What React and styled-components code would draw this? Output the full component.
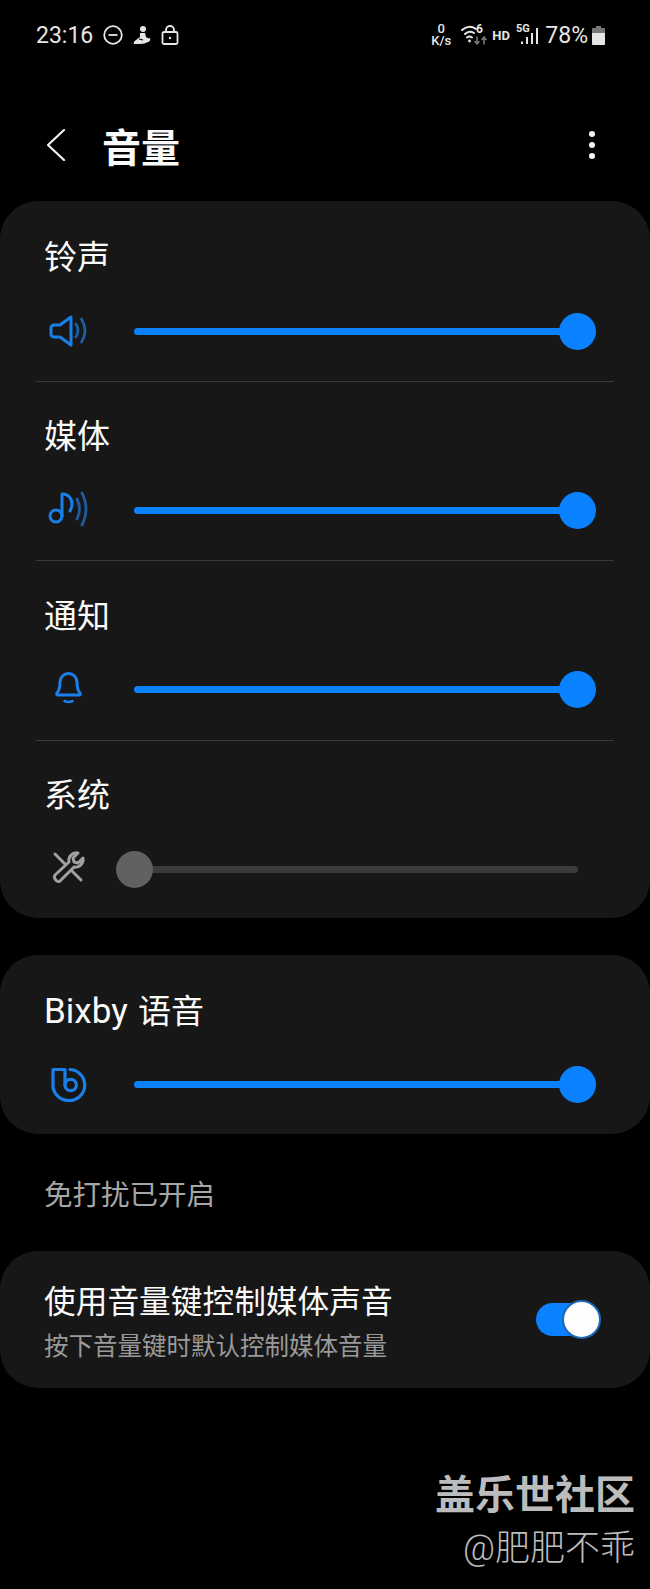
import styled, { createGlobalStyle } from 'styled-components';

const GlobalStyle = createGlobalStyle`
  html, body {
    margin: 0;
    padding: 0;
    background: #000;
  }
  body {
    font-family: Roboto, "Noto Sans CJK SC", sans-serif;
    color: #fafafa;
  }
`;

const Page = styled.div`
  width: 650px;
  height: 1589px;
  overflow: hidden;
  background: #000;
`;

const StatusBar = styled.div`
  height: 70px;
  padding: 0 45px 0 36px;
  box-sizing: border-box;
  display: flex;
  align-items: center;
  justify-content: space-between;
  color: #e6e6e6;
`;

const StatusGroup = styled.div`
  display: flex;
  align-items: center;
  gap: ${(props) => props.$gap || 0}px;
`;

const Clock = styled.span`
  font-size: 23px;
  margin-right: 10px;
`;

const Speed = styled.div`
  width: 20px;
  margin-right: 10px;
  text-align: center;
  font-size: 13px;
  line-height: 12px;
  font-weight: 500;
`;

const Hd = styled.span`
  width: 17px;
  font-size: 13px;
  font-weight: 700;
  margin: 0 7px 0 5px;
`;

const Percent = styled.span`
  font-size: 23px;
  margin: 0 4px 0 5px;
`;

const Header = styled.div`
  height: 131px;
  padding: 50px 55px 31px 44px;
  box-sizing: border-box;
  display: flex;
  align-items: center;
`;

const Title = styled.h1`
  margin: 0 0 0 32px;
  flex: 1;
  font: 700 39px/50px "Noto Sans CJK SC", sans-serif;
  color: #fafafa;
`;

const Card = styled.section`
  background: #171717;
  border-radius: 38px;
  padding: 0 36px;
  margin-bottom: ${(props) => props.$mb || 0}px;
`;

const VolumeRow = styled.div`
  height: ${(props) => props.$height || 179.5}px;
  box-sizing: border-box;
  padding: 37px 0 0 8px;
  & + & {
    padding-top: 35.5px;
    border-top: 1.5px solid #3a3a3a;
  }
`;

const RowTitle = styled.div`
  font-size: 33px;
  line-height: 40px;
  color: #fafafa;
`;

const Latin = styled.span`
  font-size: 35px;
  margin-right: 2px;
`;

const SliderLine = styled.div`
  display: flex;
  align-items: center;
  height: 40px;
  margin-top: 33px;
`;

const IconBox = styled.svg`
  width: 48px;
  height: 40px;
  flex: none;
  margin-right: 42px;
`;

const Track = styled.div`
  position: relative;
  width: 444px;
  height: 7px;
  border-radius: 4px;
  background: ${(props) => (props.$off ? '#3a3a3a' : '#0a81ff')};
`;

const Thumb = styled.div`
  position: absolute;
  top: -15px;
  left: ${(props) => (props.$off ? '-18px' : 'auto')};
  right: ${(props) => (props.$off ? 'auto' : '-18px')};
  width: 37px;
  height: 37px;
  border-radius: 50%;
  background: ${(props) => (props.$off ? '#616161' : '#0a81ff')};
`;

const SectionNote = styled.div`
  height: 117px;
  padding-left: 44px;
  display: flex;
  align-items: center;
  font-size: 28.5px;
  color: #a6a6a6;
`;

const SwitchCard = styled(Card)`
  height: 137px;
  box-sizing: border-box;
  padding: 32px 52px 0 44px;
  display: flex;
  align-items: flex-start;
  justify-content: space-between;
`;

const SwitchTitle = styled.div`
  font-size: 31.7px;
  line-height: 40px;
  color: #fafafa;
`;

const SwitchSub = styled.div`
  font-size: 24.5px;
  line-height: 32px;
  margin-top: 8px;
  color: #9a9a9a;
`;

const Toggle = styled.div`
  position: relative;
  width: 62px;
  height: 33px;
  margin-top: 20px;
  border-radius: 17px;
  background: #0a81ff;
`;

const ToggleKnob = styled.div`
  position: absolute;
  top: -3px;
  right: -3px;
  width: 35px;
  height: 35px;
  border: 2px solid #1a69b8;
  border-radius: 50%;
  background: #fdfdfd;
`;

const Watermark = styled.div`
  margin-top: 86px;
  padding-right: 15px;
  text-align: right;
  color: #bcbcbc;
`;

const WatermarkBrand = styled.div`
  font-size: 40px;
  line-height: 44px;
  font-weight: 700;
`;

const WatermarkUser = styled.div`
  font-size: 35px;
  line-height: 44px;
  margin-top: 9px;
  font-weight: 300;
`;

const blue = '#1a7fe8';
const dimBlue = '#1f5c9e';

const SpeakerIcon = () => (
  <IconBox viewBox="0 0 48 40" fill="none" strokeLinecap="round" strokeLinejoin="round">
    <path d="M27 6 16 14H10a3 3 0 0 0-3 3v6a3 3 0 0 0 3 3h6l11 8z" stroke={blue} strokeWidth="3" />
    <path d="M32 13q4 6 0 13M37.500 8q7 12 0 23" stroke={dimBlue} strokeWidth="2.800" />
  </IconBox>
);

const MusicIcon = () => (
  <IconBox viewBox="0 0 48 40" fill="none" strokeLinecap="round" strokeLinejoin="round">
    <circle cx="12" cy="26" r="6" stroke={blue} strokeWidth="3" />
    <path d="M18 26V4c6 0 10 4 10 10 0 3-1 5-2 7" stroke={blue} strokeWidth="3" />
    <path d="M33 9q5 10 0 20M38 3q8 16 0 32" stroke={dimBlue} strokeWidth="2.800" />
  </IconBox>
);

const BellIcon = () => (
  <IconBox viewBox="0 0 48 40" fill="none" strokeLinecap="round" strokeLinejoin="round">
    <path d="M13 23c3-3 3-7 3-11a8.500 8.500 0 0 1 17 0c0 4 0 8 3 11q1 2-1 2H14q-2 0-1-2z" stroke={blue} strokeWidth="3" />
    <path d="M20.500 31q4 2 8 0" stroke={blue} strokeWidth="2.600" />
  </IconBox>
);

const ToolsIcon = () => (
  <IconBox viewBox="0 0 48 40" fill="none" strokeLinecap="round" strokeLinejoin="round">
    <path d="M11 5 37 31" stroke="#a0a0a0" strokeWidth="3" />
    <path d="M11 26 25 13c-1-5 3-10 9-9l-5 5 1 4 4 1 5-5c1 6-4 10-9 9L16 32c-3 2-7-3-5-6z" fill="#171717" stroke="#a0a0a0" strokeWidth="3" />
  </IconBox>
);

const BixbyIcon = () => (
  <IconBox viewBox="0 0 48 40" fill="none" strokeLinecap="round" strokeLinejoin="round">
    <path d="M26 4.500A15.500 15.500 0 0 1 24.500 35.500 15.500 15.500 0 0 1 9 19V4.500H21V20" stroke={blue} strokeWidth="3.200" />
    <circle cx="26.700" cy="20" r="5.700" stroke={blue} strokeWidth="3.200" />
  </IconBox>
);

const channels = [
  { title: '铃声', Icon: SpeakerIcon },
  { title: '媒体', Icon: MusicIcon },
  { title: '通知', Icon: BellIcon },
  { title: '系统', Icon: ToolsIcon, off: true, height: 178 },
];

const Volume = ({ title, Icon, off, height }) => (
  <VolumeRow $height={height}>
    <RowTitle>{title}</RowTitle>
    <SliderLine>
      <Icon />
      <Track $off={off}>
        <Thumb $off={off} />
      </Track>
    </SliderLine>
  </VolumeRow>
);

const App = () => (
  <Page>
    <GlobalStyle />
    <StatusBar>
      <StatusGroup>
        <Clock>23:16</Clock>
        <StatusGroup $gap={10}>
          <svg width="20" height="20" viewBox="0 0 20 20" fill="none" stroke="#e6e6e6" strokeWidth="1.800">
            <circle cx="10" cy="10" r="8.800" />
            <path d="M5.500 10h9" />
          </svg>
          <svg width="18" height="20" viewBox="0 0 18 20" fill="#e6e6e6">
            <circle cx="10" cy="4" r="3" />
            <path d="M7 8h5l1 4q2 2 4 1 1 3-2 4-3 2-8 2H1q-1-2 2-4l4-3z" />
            <path d="M6 14l4 1" stroke="#000" strokeWidth="1.200" />
          </svg>
          <svg width="18" height="20" viewBox="0 0 18 20" fill="none" stroke="#e6e6e6" strokeWidth="1.800">
            <rect x="1.500" y="7" width="15" height="12" rx="1.500" />
            <path d="M5 7V5a4 4 0 0 1 8 0v2" />
            <circle cx="9" cy="13" r="1.200" fill="#e6e6e6" stroke="none" />
          </svg>
        </StatusGroup>
      </StatusGroup>
      <StatusGroup>
        <Speed>0<br />K/s</Speed>
        <svg width="26" height="30" viewBox="0 -4 26 30" fill="none" stroke="#e6e6e6" strokeWidth="2" strokeLinecap="round">
          <path d="M1 6q7-6 14-1M4 10q4-4 9-1M6 13.500q2.500-2 5 0" />
          <circle cx="8.500" cy="17" r="1.400" fill="#e6e6e6" stroke="none" />
          <text x="15" y="9" fontSize="12" fontWeight="700" fill="#e6e6e6" stroke="none" fontFamily="Roboto">6</text>
          <path d="M16 13v7M14 17.500l2 2.500 2-2.500" stroke="#777" strokeWidth="1.600" />
          <path d="M23 13v7M21 15.500l2-2.500 2 2.500" stroke="#777" strokeWidth="1.600" />
        </svg>
        <Hd>HD</Hd>
        <svg width="24" height="30" viewBox="0 -3 24 30" fill="#e6e6e6">
          <text x="0" y="9" fontSize="11" fontWeight="700" fontFamily="Roboto">5G</text>
          <rect x="5" y="18.500" width="2" height="2.500" />
          <rect x="10" y="14" width="2" height="7" />
          <rect x="15" y="10" width="2" height="11" />
          <rect x="20" y="5" width="2" height="16" />
        </svg>
        <Percent>78%</Percent>
        <svg width="13" height="19" viewBox="0 0 13 19">
          <path d="M4 0h5v2h3q1 0 1 1v4H0V3q0-1 1-1h3z" fill="#777" />
          <path d="M0 7h13v11q0 1-1 1H1q-1 0-1-1z" fill="#e6e6e6" />
        </svg>
      </StatusGroup>
    </StatusBar>

    <Header>
      <svg width="26" height="32" viewBox="0 0 26 32" fill="none" stroke="#f0f0f0" strokeWidth="2.200" strokeLinecap="round" strokeLinejoin="round">
        <path d="M20 1 4 16l16 15" />
      </svg>
      <Title>音量</Title>
      <svg width="6" height="28" viewBox="0 0 6 28" fill="#f4f4f4">
        <circle cx="3" cy="3" r="3" />
        <circle cx="3" cy="14" r="3" />
        <circle cx="3" cy="25" r="3" />
      </svg>
    </Header>

    <Card $mb={37}>
      {channels.map((channel) => (
        <Volume key={channel.title} {...channel} />
      ))}
    </Card>

    <Card>
      <Volume title={<><Latin>Bixby</Latin> 语音</>} Icon={BixbyIcon} height={179} />
    </Card>

    <SectionNote>免打扰已开启</SectionNote>

    <SwitchCard>
      <div>
        <SwitchTitle>使用音量键控制媒体声音</SwitchTitle>
        <SwitchSub>按下音量键时默认控制媒体音量</SwitchSub>
      </div>
      <Toggle>
        <ToggleKnob />
      </Toggle>
    </SwitchCard>

    <Watermark>
      <WatermarkBrand>盖乐世社区</WatermarkBrand>
      <WatermarkUser>@肥肥不乖</WatermarkUser>
    </Watermark>
  </Page>
);

export default App;
